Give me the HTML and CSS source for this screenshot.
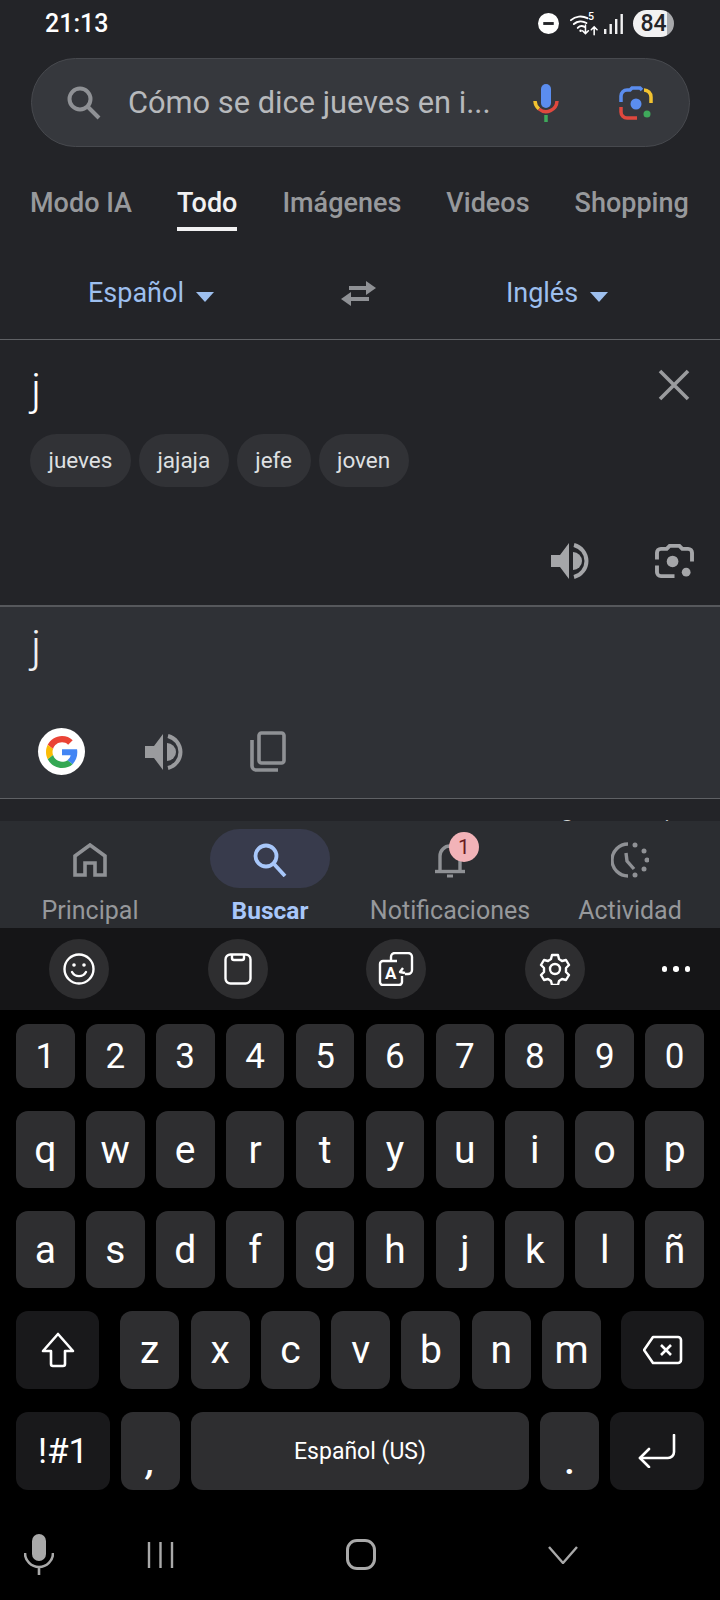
FILE: index.html
```html
<!DOCTYPE html>
<html>
<head>
  <title>Traductor</title>
  <link rel="stylesheet" href="styles.css">
</head>
<body>
  <div class="screen">
    <div class="top">
      <div class="status">
        <span class="time">21:13</span>
        <div class="status-icons">
          <svg class="ic-dnd" width="21" height="21" viewBox="0 0 22 22"><circle cx="11" cy="11" r="11" fill="#fff"/><rect x="5.500" y="9.500" width="11" height="3" fill="#232428"/></svg>
          <svg class="ic-wifi" width="29" height="28" viewBox="0 0 30 28" fill="none" stroke="#fff" stroke-linecap="round">
            <path d="M1 10a15 15 0 0 1 17-2" stroke-width="2"/>
            <path d="M4 14a11 11 0 0 1 13-1" stroke-width="2"/>
            <path d="M8 18a6 6 0 0 1 7-1" stroke-width="2"/>
            <circle cx="11" cy="21" r="1.300" fill="#fff" stroke="none"/>
            <text class="wifi-5" x="18.500" y="10">5</text>
            <path d="M16 15v9m-3-3l3 3 3-3" stroke-width="1.600"/>
            <path d="M25 25v-8m-3 3l3-3 3 3" stroke-width="1.600"/>
          </svg>
          <svg class="ic-signal" width="19" height="22" viewBox="0 0 19 22" fill="#f1f1f2"><rect x="0" y="16" width="2.400" height="5"/><rect x="5.500" y="11" width="2.400" height="10"/><rect x="11" y="6" width="2.400" height="15"/><rect x="16.500" y="1" width="2.400" height="20"/></svg>
          <div class="battery"><span>84</span></div>
        </div>
      </div>

      <div class="search">
        <svg class="search-ic" width="34" height="34" viewBox="0 0 34 34" fill="none" stroke="#8f9195" stroke-width="4"><circle cx="13" cy="13" r="10.500"/><path d="M21 21l11 11"/></svg>
        <span class="search-text">Cómo se dice jueves en i...</span>
        <svg class="search-mic" width="26" height="38" viewBox="0 0 26 38" fill="none" stroke-width="3.500">
          <rect x="8" y="0" width="10" height="24" rx="5" fill="#5b8def"/>
          <path d="M2 17a11 11 0 0 0 4 8" stroke="#f2c230"/>
          <path d="M6 25a11 11 0 0 0 18-8" stroke="#e0483e"/>
          <path d="M13 31v7" stroke="#3fa95b"/>
        </svg>
        <svg class="search-lens" width="34" height="34" viewBox="0 0 34 34" fill="none" stroke-width="3.500">
          <path d="M2 16V10a6 6 0 0 1 6-6h3l2-2h8l2 2" stroke="#5b8def"/>
          <path d="M25 4a7 7 0 0 1 7 7v6" stroke="#f2c230"/>
          <path d="M2 21v5a6 6 0 0 0 6 6h10" stroke="#e0483e"/>
          <circle cx="17" cy="18" r="5.500" fill="#5b8def"/>
          <circle cx="28" cy="28" r="3.500" fill="#3fa95b"/>
        </svg>
      </div>

      <div class="tabs">
        <span class="tab">Modo IA</span>
        <span class="tab active">Todo</span>
        <span class="tab">Imágenes</span>
        <span class="tab">Videos</span>
        <span class="tab">Shopping</span>
      </div>

      <div class="langs">
        <div class="lang"><span>Español</span><i class="caret"></i></div>
        <svg class="swap" width="36" height="27" viewBox="0 0 36 27" fill="#8f9195"><path d="M25 1l10 7-10 7z"/><path d="M8 6h18v4H8z"/><path d="M10 12L0 19l10 7z"/><path d="M9 17h19v4H9z"/></svg>
        <div class="lang"><span>Inglés</span><i class="caret"></i></div>
      </div>
    </div>

    <div class="source">
      <div class="source-top">
        <span class="big-j">j</span>
        <svg class="close" width="32" height="32" viewBox="0 0 32 32" stroke="#9a9b9e" stroke-width="3.600"><path d="M2 2l28 28M30 2L2 30"/></svg>
      </div>
      <div class="chips">
        <span class="chip">jueves</span>
        <span class="chip">jajaja</span>
        <span class="chip">jefe</span>
        <span class="chip">joven</span>
      </div>
      <div class="source-actions">
        <svg width="38" height="36" viewBox="0 0 38 36" fill="#a5a6a9"><path d="M0 12H9L18 0V36L9 24H0Z"/><path d="M22 9a9 9 0 0 1 0 18Z"/><path d="M23 2a16.500 16.500 0 0 1 0 32" fill="none" stroke="#a5a6a9" stroke-width="4"/></svg>
        <svg width="39" height="36" viewBox="0 0 40 37" fill="none" stroke="#a5a6a9" stroke-width="4"><path d="M2 17V10a4 4 0 0 1 4-4h6l3-3h10l3 3h6a4 4 0 0 1 4 4v9"/><path d="M2 23v7a4 4 0 0 0 4 4h14"/><circle cx="18" cy="19" r="6" fill="#a5a6a9" stroke="none"/><circle cx="32" cy="30" r="4.500" fill="#a5a6a9" stroke="none"/></svg>
      </div>
    </div>

    <div class="target">
      <span class="big-j dim">j</span>
      <div class="target-actions">
        <div class="g-badge">
          <svg width="32" height="32" viewBox="0 0 48 48">
            <path fill="#EA4335" d="M24 9.500c3.540 0 6.710 1.220 9.210 3.600l6.850-6.850C35.900 2.380 30.470 0 24 0 14.620 0 6.510 5.380 2.560 13.220l7.980 6.190C12.430 13.720 17.740 9.500 24 9.500z"/>
            <path fill="#4285F4" d="M46.980 24.550c0-1.570-.15-3.090-.38-4.550H24v9.020h12.940c-.58 2.960-2.260 5.480-4.780 7.180l7.730 6c4.510-4.180 7.090-10.360 7.090-17.650z"/>
            <path fill="#FBBC05" d="M10.530 28.590c-.48-1.450-.76-2.990-.76-4.590s.27-3.140.76-4.590l-7.980-6.190C.92 16.460 0 20.120 0 24c0 3.880.92 7.540 2.560 10.780l7.970-6.190z"/>
            <path fill="#34A853" d="M24 48c6.480 0 11.930-2.130 15.890-5.810l-7.730-6c-2.150 1.450-4.920 2.300-8.160 2.300-6.260 0-11.570-4.220-13.470-9.910l-7.980 6.190C6.510 42.620 14.620 48 24 48z"/>
          </svg>
        </div>
        <svg class="t-speak" width="38" height="36" viewBox="0 0 38 36" fill="#9a9b9e"><path d="M0 12H9L18 0V36L9 24H0Z"/><path d="M22 9a9 9 0 0 1 0 18Z"/><path d="M23 2a16.500 16.500 0 0 1 0 32" fill="none" stroke="#9a9b9e" stroke-width="4"/></svg>
        <svg class="t-copy" width="36" height="41" viewBox="0 0 36 41" fill="none" stroke="#8f9195" stroke-width="3.600"><rect x="9" y="2" width="25" height="30" rx="2.500"/><path d="M2 9v26a4 4 0 0 0 4 4h22"/></svg>
      </div>
    </div>

    <div class="peek"><span>Comentarios</span></div>

    <div class="bottom-nav">
      <div class="nav-item">
        <div class="nav-icon">
          <svg width="34" height="34" viewBox="0 0 34 34" fill="none" stroke="#8f9195" stroke-width="3.600"><path d="M2 32V13L17 2l15 11v19H22V20H12v12Z"/></svg>
        </div>
        <span>Principal</span>
      </div>
      <div class="nav-item on">
        <div class="nav-icon pill">
          <svg width="34" height="34" viewBox="0 0 34 34" fill="none" stroke="#a8c7fa" stroke-width="3.800"><circle cx="13" cy="13" r="10.500"/><path d="M21 21l11 12"/></svg>
        </div>
        <span>Buscar</span>
      </div>
      <div class="nav-item">
        <div class="nav-icon">
          <svg width="32" height="36" viewBox="0 0 32 36" fill="none" stroke="#8f9195" stroke-width="3.400"><path d="M6 29V14a10 10 0 0 1 20 0v15"/><path d="M1 29.500h30"/><path d="M13 34h6" stroke-width="3"/></svg>
          <span class="badge">1</span>
        </div>
        <span>Notificaciones</span>
      </div>
      <div class="nav-item">
        <div class="nav-icon">
          <svg width="38" height="36" viewBox="0 0 38 36" fill="none" stroke="#8f9195" stroke-width="3.400"><path d="M17 2a16 16 0 0 0 0 32"/><path d="M15 11l1 8 7 8"/><g fill="#8f9195" stroke="none"><circle cx="24" cy="3" r="2.500"/><circle cx="33" cy="9" r="2.500"/><circle cx="36" cy="18" r="2.500"/><circle cx="33" cy="27" r="2.500"/><circle cx="24" cy="33" r="2.500"/></g></svg>
        </div>
        <span>Actividad</span>
      </div>
    </div>

    <div class="kb-tools">
      <div class="tool">
        <svg width="32" height="32" viewBox="0 0 32 32" fill="none" stroke="#fff" stroke-width="2.400"><circle cx="16" cy="16" r="14.500"/><path d="M9 19a8 8 0 0 0 14 0" stroke-linecap="round"/><circle cx="11" cy="12" r="1.800" fill="#fff" stroke="none"/><circle cx="21" cy="12" r="1.800" fill="#fff" stroke="none"/></svg>
      </div>
      <div class="tool">
        <svg width="28" height="32" viewBox="0 0 28 32" fill="none" stroke="#fff" stroke-width="2.400"><rect x="1.500" y="1.500" width="25" height="29" rx="5"/><path d="M8 2v3a2 2 0 0 0 2 2h8a2 2 0 0 0 2-2V2"/></svg>
      </div>
      <div class="tool">
        <svg width="36" height="34" viewBox="0 0 36 34" fill="none" stroke="#fff" stroke-width="2.400"><path d="M13 8V5a4 4 0 0 1 4-4h13a4 4 0 0 1 4 4v13a4 4 0 0 1-4 4h-3"/><path d="M27 21l-5-1 3-4" stroke-linejoin="round"/><path d="M24 24v6a3 3 0 0 1-3 3H5a3 3 0 0 1-3-3V12a3 3 0 0 1 3-3h14"/><text class="tool-a" x="7" y="27">A</text></svg>
      </div>
      <div class="tool">
        <svg width="32" height="32" viewBox="0 0 32 32" fill="none" stroke="#fff" stroke-width="2.400" stroke-linejoin="round"><circle cx="16" cy="16" r="5"/><path d="M13 2h6l1 4 3 2 4-1 3 5-3 3v4l3 3-3 5-4-1-3 2-1 4h-6l-1-4-3-2-4 1-3-5 3-3v-4l-3-3 3-5 4 1 3-2Z"/></svg>
      </div>
      <div class="dots"><i></i><i></i><i></i></div>
    </div>

    <div class="keys">
      <div class="row row-digits">
        <div class="key">1</div><div class="key">2</div><div class="key">3</div><div class="key">4</div><div class="key">5</div>
        <div class="key">6</div><div class="key">7</div><div class="key">8</div><div class="key">9</div><div class="key">0</div>
      </div>
      <div class="row">
        <div class="key">q</div><div class="key">w</div><div class="key">e</div><div class="key">r</div><div class="key">t</div>
        <div class="key">y</div><div class="key">u</div><div class="key">i</div><div class="key">o</div><div class="key">p</div>
      </div>
      <div class="row">
        <div class="key">a</div><div class="key">s</div><div class="key">d</div><div class="key">f</div><div class="key">g</div>
        <div class="key">h</div><div class="key">j</div><div class="key">k</div><div class="key">l</div><div class="key">ñ</div>
      </div>
      <div class="row row-shift">
        <div class="key fn shift">
          <svg width="34" height="36" viewBox="0 0 34 36" fill="none" stroke="#fff" stroke-width="2.600" stroke-linejoin="round"><path d="M17 2L2 19h8v13a2 2 0 0 0 2 2h10a2 2 0 0 0 2-2V19h8Z"/></svg>
        </div>
        <div class="key">z</div><div class="key">x</div><div class="key">c</div><div class="key">v</div>
        <div class="key">b</div><div class="key">n</div><div class="key">m</div>
        <div class="key fn del">
          <svg width="40" height="30" viewBox="0 0 40 30" fill="none" stroke="#fff" stroke-width="2.600" stroke-linejoin="round"><path d="M10 2h25a3 3 0 0 1 3 3v20a3 3 0 0 1-3 3H10L1 15Z"/><path d="M18 10l10 10M28 10L18 20"/></svg>
        </div>
      </div>
      <div class="row row-space">
        <div class="key fn sym">!#1</div>
        <div class="key low comma">,</div>
        <div class="key space">Español (US)</div>
        <div class="key low">.</div>
        <div class="key fn">
          <svg width="38" height="34" viewBox="0 0 38 34" fill="none" stroke="#fff" stroke-width="2.600" stroke-linecap="round" stroke-linejoin="round"><path d="M36 1v17a6 6 0 0 1-6 6H2"/><path d="M11 15l-9 9 9 9"/></svg>
        </div>
      </div>
    </div>

    <div class="sysnav">
      <svg width="30" height="41" viewBox="0 0 30 41" fill="none"><rect x="8" y="0" width="14" height="27" rx="7" fill="#a9a9a9"/><path d="M1 19a14 14 0 0 0 28 0M15 33v8" stroke="#a9a9a9" stroke-width="2.600"/></svg>
      <svg width="27" height="26" viewBox="0 0 27 26" stroke="#a9a9a9" stroke-width="2.400"><path d="M2 0v26M13.500 0v26M25 0v26"/></svg>
      <div class="sys-home"></div>
      <svg width="30" height="18" viewBox="0 0 30 18" fill="none" stroke="#a9a9a9" stroke-width="2.400"><path d="M1 1l14 16L29 1"/></svg>
    </div>
  </div>
</body>
</html>
```

FILE: styles.css
```css
* {
  box-sizing: border-box;
}
body {
  margin: 0;
  background: #000;
  font-family: Roboto, "Noto Sans", sans-serif;
}
.screen {
  width: 720px;
  height: 1600px;
  overflow: hidden;
  display: flex;
  flex-direction: column;
  background: #000;
}
.top {
  flex: none;
  background: #232428;
}

/* status bar */
.status {
  height: 58px;
  display: flex;
  justify-content: space-between;
  align-items: flex-start;
  padding: 10px 46px 0 45px;
}
.time {
  color: #fff;
  font-size: 25px;
  font-weight: 500;
  line-height: 27px;
}
.status-icons {
  display: flex;
  align-items: center;
  height: 27px;
}
.ic-dnd {
  margin-right: 11px;
}
.ic-wifi {
  margin-right: 5px;
}
.wifi-5 {
  fill: #fff;
  stroke: none;
  font-size: 11px;
  font-weight: 500;
}
.ic-signal {
  margin-right: 10px;
}
.battery {
  width: 41px;
  height: 27px;
  border-radius: 14px;
  background: linear-gradient(90deg, #f1f1f2 82%, #a8a9ac 82%);
  color: #232428;
  font-size: 23px;
  font-weight: 500;
  text-align: center;
  line-height: 27px;
}

/* search + tabs */
.search {
  height: 89px;
  margin: 0 30px 0 31px;
  padding: 0 0 0 35px;
  background: #36383d;
  border: 1px solid #47494e;
  border-radius: 45px;
  display: flex;
  align-items: center;
}
.search-text {
  margin-left: 27px;
  width: 385px;
  color: #b7b9bc;
  font-size: 30.800px;
  white-space: nowrap;
}
.search-mic {
  margin-left: 20px;
}
.search-lens {
  margin-left: 60px;
}
.tabs {
  height: 86px;
  display: flex;
  gap: 45px;
  padding-left: 30px;
}
.tab {
  height: 84px;
  padding-top: 38px;
  color: #97999c;
  font-size: 27px;
  font-weight: 500;
  line-height: 36px;
  white-space: nowrap;
  border-bottom: 4px solid transparent;
}
.tab.active {
  color: #f1f1f2;
  border-bottom-color: #f1f1f2;
}

/* language row */
.langs {
  height: 107px;
  border-bottom: 1px solid #5f6165;
  display: grid;
  grid-template-columns: 302px 114px 282px;
  align-items: center;
  justify-items: center;
  padding-top: 14px;
}
.lang {
  display: flex;
  align-items: center;
  gap: 12px;
  color: #9dbfee;
  font-size: 27px;
}
.caret {
  width: 0;
  height: 0;
  margin-top: 7px;
  border-left: 9.500px solid transparent;
  border-right: 9.500px solid transparent;
  border-top: 10px solid #9dbfee;
}

/* source text */
.source {
  flex: none;
  height: 267px;
  background: #232428;
  border-bottom: 2px solid #56585c;
  padding: 0 26px 0 30px;
  display: flex;
  flex-direction: column;
}
.source-top {
  height: 94px;
  display: flex;
  justify-content: space-between;
  align-items: flex-start;
  padding: 27px 4px 0 1px;
}
.big-j {
  color: #fff;
  font-size: 45px;
  font-weight: 300;
  line-height: 46px;
}
.big-j.dim {
  color: #f0f0f2;
}
.close {
  margin-top: 2px;
}
.chips {
  display: flex;
  gap: 8px;
}
.chip {
  height: 53px;
  padding: 0 18.500px;
  border-radius: 27px;
  background: #313236;
  color: #dfe0e2;
  font-size: 22.500px;
  line-height: 53px;
}
.source-actions {
  display: flex;
  justify-content: flex-end;
  gap: 66px;
  margin-top: 56px;
}

/* translated text */
.target {
  flex: none;
  height: 192px;
  background: #2f3136;
  border-bottom: 1px solid #5f6165;
  padding: 17px 0 0 31px;
}
.target-actions {
  display: flex;
  align-items: center;
  margin-top: 58px;
  padding-left: 7px;
}
.g-badge {
  width: 47px;
  height: 47px;
  border-radius: 50%;
  background: #fff;
  display: flex;
  align-items: center;
  justify-content: center;
}
.t-speak {
  margin-left: 60px;
}
.t-copy {
  margin-left: 67px;
}

.peek {
  flex: none;
  height: 22px;
  background: #232428;
  overflow: hidden;
  padding: 18px 24px 0 0;
  text-align: right;
  color: #d6d7d9;
  font-size: 24px;
  line-height: 24px;
}

/* bottom nav */
.bottom-nav {
  flex: none;
  height: 107px;
  background: #2b2d31;
  display: grid;
  grid-template-columns: repeat(4, 1fr);
  padding-top: 8px;
}
.nav-item {
  display: flex;
  flex-direction: column;
  align-items: center;
  color: #96989b;
  font-size: 25px;
}
.nav-item.on {
  color: #a8c7fa;
  font-size: 24.500px;
  font-weight: 700;
}
.nav-item > span {
  margin-top: 9px;
  line-height: 28px;
  white-space: nowrap;
}
.nav-icon {
  position: relative;
  width: 120px;
  height: 59px;
  display: flex;
  align-items: center;
  justify-content: center;
  padding-top: 2px;
}
.nav-icon.pill {
  border-radius: 30px;
  background: #383b4c;
}
.badge {
  position: absolute;
  left: 59px;
  top: 3px;
  width: 30px;
  height: 30px;
  border-radius: 50%;
  background: #f2b3b8;
  color: #6a1b22;
  font-size: 21px;
  font-weight: 400;
  line-height: 30px;
  text-align: center;
}

/* keyboard */
.kb-tools {
  flex: none;
  height: 82px;
  background: #151517;
  display: grid;
  grid-template-columns: 60px 60px 60px 60px 30px;
  column-gap: 98.700px;
  align-items: center;
  padding-left: 49px;
}
.tool {
  width: 60px;
  height: 60px;
  border-radius: 50%;
  background: #2e2e30;
  display: flex;
  align-items: center;
  justify-content: center;
}
.tool-a {
  fill: #fff;
  stroke: none;
  font-size: 17px;
  font-weight: 700;
}
.dots {
  display: flex;
  gap: 6px;
  margin-left: -22px;
}
.dots i {
  width: 5.500px;
  height: 5.500px;
  border-radius: 50%;
  background: #fff;
}
.keys {
  flex: none;
  padding: 14px 16px 0;
  display: flex;
  flex-direction: column;
  gap: 23px;
}
.row {
  display: grid;
  grid-template-columns: repeat(10, 1fr);
  column-gap: 11.200px;
  height: 77px;
}
.row-digits {
  height: 64px;
}
.row-shift {
  display: flex;
  column-gap: 11.300px;
  height: 78px;
}
.row-shift .key {
  width: 59px;
}
.row-shift .shift {
  width: 83px;
  margin-right: 10px;
}
.row-shift .del {
  width: 83px;
  margin-left: auto;
}
.row-space {
  grid-template-columns: 94px 59px 1fr 59px 94px;
  height: 78px;
}
.key {
  background: #2e2e30;
  border-radius: 12px;
  color: #fff;
  font-size: 39px;
  display: flex;
  align-items: center;
  justify-content: center;
}
.row-digits .key {
  font-size: 35px;
}
.key.fn {
  background: #19191b;
}
.key.sym {
  font-size: 35px;
}
.key.space {
  font-size: 23px;
}
.key.low {
  align-items: flex-end;
  font-size: 34px;
  font-weight: 700;
  line-height: 46px;
  padding-bottom: 5px;
}
.key.comma {
  font-style: italic;
}

/* android nav */
.sysnav {
  flex: none;
  height: 110px;
  display: grid;
  grid-template-columns: 78px 164px 238px 166px;
  justify-items: center;
  align-items: center;
  padding-top: 19px;
}
.sys-home {
  width: 30px;
  height: 31px;
  border: 3px solid #a9a9a9;
  border-radius: 11px;
}
```
